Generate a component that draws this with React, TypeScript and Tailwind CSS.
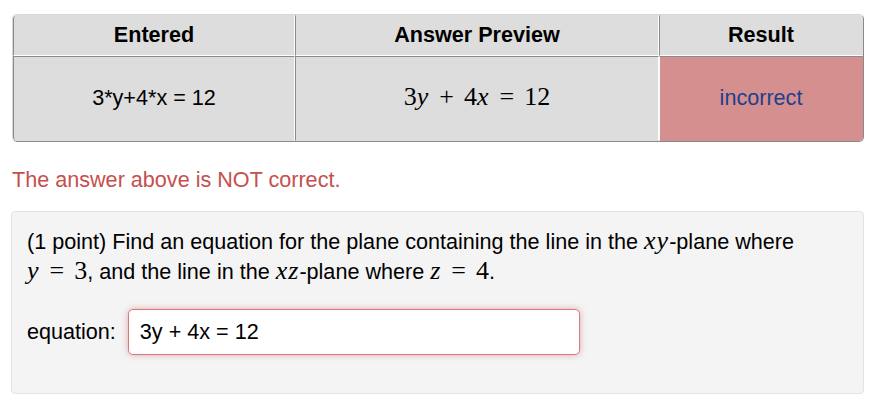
import React from 'react';

const sans = { fontFamily: '"Liberation Sans", Arial, sans-serif' };

// variable in math italic
function V({ children }: { children: React.ReactNode }) {
  return <span className="italic tracking-[1px]">{children}</span>;
}

function Op({ children }: { children: React.ReactNode }) {
  return <span className="not-italic mx-[10px]">{children}</span>;
}

function M({ children }: { children: React.ReactNode }) {
  return (
    <span className="font-['Liberation_Serif','Times_New_Roman',serif] text-[26px] leading-none">{children}</span>
  );
}

export default function App() {
  return (
    <div className="w-[882px] h-[408px] bg-white text-black text-[21.6px]" style={sans}>
      <div className="pt-[14px] px-[12px]">
        {/* ATTEMPT RESULTS TABLE */}
        <table className="w-[852px] border-separate border-spacing-0 rounded-[5px] border border-t-[#d8d8d8] border-l-[#d8d8d8] border-r-[#8a8a8a] border-b-[#8a8a8a] overflow-hidden">
          <thead>
            <tr className="h-[41px] bg-[#dddddd]">
              <th className="w-[282px] font-bold border-l border-t border-b border-r border-l-[#8a8a8a] border-t-[#dddddd] border-b-white border-r-white rounded-tl-[4px]">
                Entered
              </th>
              <th className="w-[364px] font-bold border-l border-t border-b border-r border-l-[#8a8a8a] border-t-[#dddddd] border-b-white border-r-white">
                Answer Preview
              </th>
              <th className="font-bold border-l border-t border-b border-r border-l-[#8a8a8a] border-t-[#dddddd] border-b-white border-r-[#dddddd] rounded-tr-[4px]">
                Result
              </th>
            </tr>
          </thead>
          <tbody>
            <tr className="h-[85px]">
              <td className="text-center bg-[#dddddd] border-l border-t border-r border-b border-l-[#8a8a8a] border-t-[#8a8a8a] border-r-white border-b-[#dddddd] rounded-bl-[4px]">
                3*y+4*x = 12
              </td>
              <td className="text-center bg-[#dddddd] border-l border-t border-r border-b border-l-[#8a8a8a] border-t-[#8a8a8a] border-r-white border-b-[#dddddd]">
                <M>
                  3<V>y</V>
                  <Op>+</Op>4<V>x</V>
                  <Op>=</Op>12
                </M>
              </td>
              <td className="text-center bg-[#d58f8f] text-[#1d3f8c] border-l border-t border-r border-b border-l-white border-t-[#8a8a8a] border-r-[#d58f8f] border-b-[#d58f8f] rounded-br-[4px]">
                incorrect
              </td>
            </tr>
          </tbody>
        </table>
      </div>

      {/* FEEDBACK MESSAGE */}
      <p className="mt-[24px] pl-[12px] leading-[28px] text-[#c4504e]">
        The answer above is NOT correct.
      </p>

      {/* PROBLEM BOX */}
      <div className="mt-[17px] ml-[11px] w-[853px] h-[183px] bg-[#f4f4f4] border border-[#e3e3e3] rounded-[4px] px-[15px] pt-[15px]">
        <p className="leading-[30px]">
          (1 point) Find an equation for the plane containing the line in the{' '}
          <M>
            <V>xy</V>
          </M>
          -plane where
          <br />
          <M>
            <V>y</V>
            <Op>=</Op>3
          </M>
          , and the line in the{' '}
          <M>
            <V>xz</V>
          </M>
          -plane where{' '}
          <M>
            <V>z</V>
            <Op>=</Op>4
          </M>
          .
        </p>

        <div className="mt-[22px] flex items-center gap-[12px]">
          <label>equation:</label>
          <div className="w-[452px] h-[46px] bg-white border border-[#d47a7a] rounded-[5px] shadow-[0_0_6px_rgba(210,110,110,0.55)] flex items-center px-[11px]">
            3y + 4x = 12
          </div>
        </div>
      </div>
    </div>
  );
}
